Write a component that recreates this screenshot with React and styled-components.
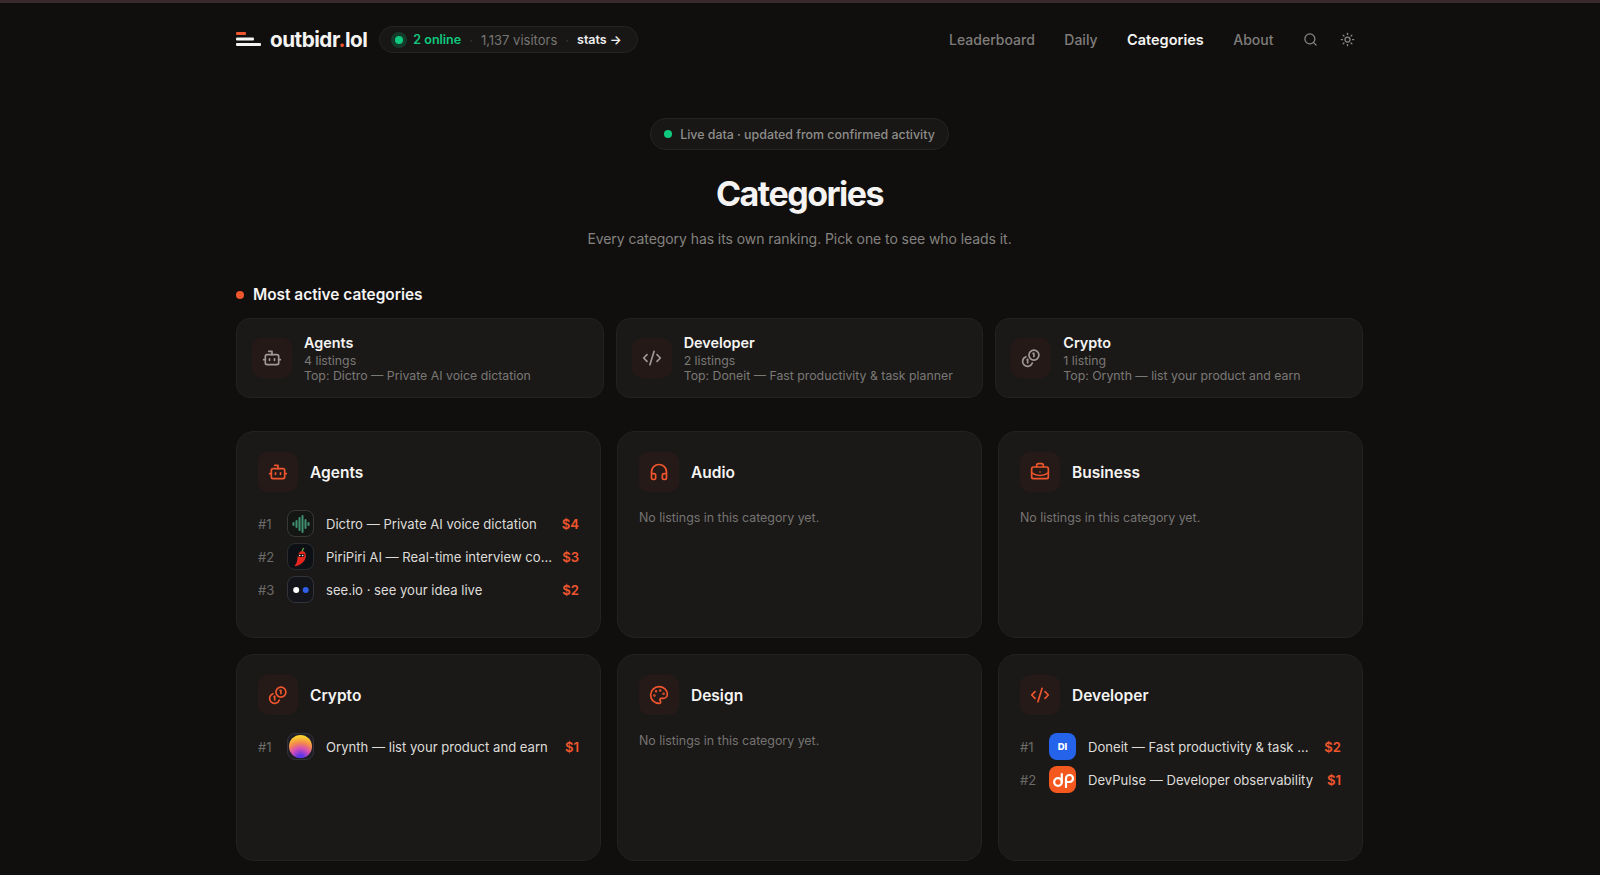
import React from "react";
import styled, { createGlobalStyle } from "styled-components";
import { Bot, Headphones, BriefcaseBusiness, Palette, CodeXml, Search, Sun } from "lucide-react";

const Global = createGlobalStyle`
  html, body { margin: 0; padding: 0; background: #100f0e; }
  body { font-family: Inter, "Liberation Sans", sans-serif; color: #f5f4f2; -webkit-font-smoothing: antialiased; }
  * { box-sizing: border-box; }
`;

const Page = styled.div`
  height: 875px;
  overflow: hidden;
  border-top: 3px solid #3a2a2e;
`;
const Container = styled.div`
  width: 1127px;
  margin-left: 236px;
`;
const Header = styled.header`
  height: 73px;
  display: flex;
  align-items: center;
  justify-content: space-between;
`;
const Left = styled.div`
  display: flex;
  align-items: center;
`;
const Brand = styled.div`
  display: flex;
  align-items: center;
  gap: 6px;
  font-size: 20.7px;
  font-weight: 700;
  letter-spacing: -0.5px;
  margin-right: 12px;
  span { color: #f0562e; }
`;
const BrandName = styled.div`
  margin-left: 3px;
`;
const StatPill = styled.div`
  height: 27px;
  border: 1px solid #252423;
  border-radius: 14px;
  background: #181716;
  display: flex;
  align-items: center;
  padding: 0 15px;
  font-size: 13px;
  color: #777572;
  white-space: nowrap;
`;
const PulseDot = styled.i`
  width: 8px;
  height: 8px;
  border-radius: 50%;
  background: #10c97e;
  box-shadow: 0 0 0 4px rgba(16, 201, 126, 0.2);
  margin-right: 10px;
`;
const Online = styled.b`
  color: #10c97e;
  font-weight: 600;
  font-size: 12.5px;
`;
const Sep = styled.span`
  margin: 0 8px;
  color: #3a3938;
`;
const StatsLink = styled.b`
  color: #f0efed;
  font-weight: 600;
  font-size: 12.5px;
`;
const Nav = styled.nav`
  display: flex;
  align-items: center;
  font-size: 14px;
  padding-right: 8px;
`;
const NavLink = styled.a`
  margin-right: 29.5px;
  color: ${(p) => (p.$active ? "#f5f4f2" : "#7f7d7a")};
  font-weight: ${(p) => (p.$active ? 600 : 500)};
  font-size: ${(p) => (p.$active ? "14.5px" : "14px")};
`;
const NavIcon = styled.span`
  display: flex;
  color: #8a8885;
  margin-left: ${(p) => p.$ml || 0}px;
`;
const Hero = styled.section`
  display: flex;
  flex-direction: column;
  align-items: center;
  padding-top: 42px;
`;
const LiveBadge = styled.div`
  height: 32px;
  padding: 0 13px;
  border: 1px solid #252423;
  border-radius: 16px;
  background: #181716;
  display: flex;
  align-items: center;
  gap: 8px;
  font-size: 12.4px;
  font-weight: 500;
  color: #8f8d8a;
`;
const GreenDot = styled.i`
  width: 8px;
  height: 8px;
  border-radius: 50%;
  background: #10c97e;
`;
const Title = styled.h1`
  margin: 22px 0 0;
  font-size: 34px;
  line-height: 44px;
  font-weight: 700;
  letter-spacing: -1.5px;
`;
const Subtitle = styled.p`
  margin: 12px 0 0;
  font-size: 14px;
  line-height: 22px;
  color: #84827f;
  letter-spacing: -0.07px;
`;
const SectionTitle = styled.h2`
  margin: 34px 0 12px;
  display: flex;
  align-items: center;
  gap: 9px;
  font-size: 15.4px;
  line-height: 22px;
  font-weight: 600;
  &::before {
    content: "";
    width: 8px;
    height: 8px;
    border-radius: 50%;
    background: #f0562e;
  }
`;
const TopGrid = styled.div`
  display: grid;
  grid-template-columns: repeat(3, minmax(0, 1fr));
  gap: 12px;
`;
const TopCard = styled.div`
  height: 80px;
  border: 1px solid #232221;
  border-radius: 14px;
  background: #1a1918;
  display: flex;
  align-items: center;
  gap: 12px;
  padding: 0 15px;
`;
const IconTile = styled.div`
  width: ${(p) => p.$size}px;
  height: ${(p) => p.$size}px;
  flex: none;
  border-radius: 10px;
  background: ${(p) => (p.$muted ? "#241917" : "#251a17")};
  color: ${(p) => (p.$muted ? "#a09a94" : "#f0562e")};
  display: flex;
  align-items: center;
  justify-content: center;
`;
const TopText = styled.div`
  font-size: 12.3px;
  line-height: 14.5px;
  color: #7a7875;
`;
const TopName = styled.div`
  font-size: 14.4px;
  line-height: 20px;
  font-weight: 600;
  margin-bottom: 1px;
  color: #f5f4f2;
`;
const CatGrid = styled.div`
  margin-top: 33px;
  display: grid;
  grid-template-columns: repeat(3, minmax(0, 1fr));
  gap: 16px;
`;
const CatCard = styled.div`
  height: 207px;
  border: 1px solid #232221;
  border-radius: 18px;
  background: #1a1918;
  padding: 20px 21px;
`;
const CatHead = styled.div`
  display: flex;
  align-items: center;
  gap: 12px;
  font-size: 15.5px;
  font-weight: 600;
  margin-bottom: 18px;
`;
const Empty = styled.div`
  margin-top: 16px;
  font-size: 12.4px;
  color: #767471;
`;
const Rows = styled.div`
  display: flex;
  flex-direction: column;
  gap: 6px;
`;
const Row = styled.div`
  height: 27px;
  display: flex;
  align-items: center;
  font-size: 13.1px;
`;
const Rank = styled.span`
  width: 29px;
  flex: none;
  color: #6d6b68;
`;
const Name = styled.span`
  flex: 1;
  min-width: 0;
  margin-left: 12px;
  white-space: nowrap;
  overflow: hidden;
  text-overflow: ellipsis;
  color: #dedcd9;
`;
const Price = styled.b`
  flex: none;
  margin-left: 8px;
  color: #f0562e;
  font-weight: 600;
`;
const Thumb = styled.span`
  width: 27px;
  height: 27px;
  flex: none;
  border-radius: 8px;
  border: 1px solid ${(p) => p.$border || "transparent"};
  background: ${(p) => p.$bg};
  color: #fff;
  display: flex;
  align-items: center;
  justify-content: center;
  overflow: hidden;
  font-size: 9.5px;
  font-weight: 800;
`;
const OrbBall = styled.i`
  width: 23px;
  height: 23px;
  border-radius: 50%;
  background: radial-gradient(circle at 50% 100%, #5b35e8 0%, #5b35e8 10%, #d74fb5 38%, #f48a4e 60%, #fdd42c 85%);
`;

const LogoMark = () => (
  <svg width="25" height="15" viewBox="0 0 25 15">
    <rect x="0" y="0" width="10" height="3" rx="1" fill="#f0562e" />
    <rect x="0" y="5.5" width="18" height="3" rx="1" fill="#f5f4f2" />
    <rect x="0" y="11" width="25" height="3" rx="1" fill="#f5f4f2" />
  </svg>
);
const CoinsIcon = ({ size }) => (
  <svg width={size} height={size} viewBox="0 0 24 24" fill="none" stroke="currentColor" strokeWidth="2" strokeLinecap="round" strokeLinejoin="round">
    <circle cx="15.5" cy="8.5" r="6" />
    <path d="M5.9 10.4A6 6 0 1 0 13.6 18" />
    <path d="M14.5 6.5h1v4" />
    <path d="m7.3 14.2.7-.7v4.5" />
  </svg>
);
const DictroArt = () => (
  <svg width="18" height="18" viewBox="0 0 18 18" stroke="#3f8f70" strokeWidth="2" strokeLinecap="round">
    <path d="M1.500 8v2M4.500 6v6M7.500 3v12M10.500 1v16M13.500 5v8M16.500 8v2" />
  </svg>
);
const ChiliArt = () => (
  <svg width="18" height="20" viewBox="3 0 18 23">
    <path d="M13.500 4.500c3.500.5 4.500 3.500 4 7-.8 5-5.500 9.500-12 10.500-.8.100-1-.5-.4-1 2-1.700 2.400-4.500 2.900-8.500.4-4 2.500-8.500 5.500-8z" fill="#e5261f" />
    <path d="M13 5c-.2-1.800.5-3.200 2-4l.8 1c-1.200.7-1.500 1.700-1.300 3.200z" fill="#5aa83a" />
    <rect x="8.500" y="8" width="7.500" height="3.400" rx="1.200" fill="#1b1310" />
    <circle cx="10.600" cy="9.700" r=".9" fill="#fff" />
    <circle cx="13.900" cy="9.700" r=".9" fill="#fff" />
  </svg>
);
const SeeArt = () => (
  <svg width="20" height="8" viewBox="0 0 20 8">
    <circle cx="5.200" cy="4" r="3" fill="#fff" />
    <circle cx="14.700" cy="4" r="3" fill="#2f5fe8" />
  </svg>
);
const PulseArt = () => (
  <svg width="22" height="16" viewBox="0 0 22 16" fill="none" stroke="#fff" strokeWidth="2.200" strokeLinecap="round">
    <circle cx="6" cy="10" r="3.800" />
    <path d="M9.800 2v8" />
    <path d="M14 15V6.500a3.500 3.500 0 1 1 3.500 3.500H15" />
  </svg>
);

const topCards = [
  { name: "Agents", icon: Bot, count: "4 listings", top: "Dictro — Private AI voice dictation" },
  { name: "Developer", icon: CodeXml, count: "2 listings", top: "Doneit — Fast productivity & task planner" },
  { name: "Crypto", icon: CoinsIcon, count: "1 listing", top: "Orynth — list your product and earn" },
];

const cats = [
  {
    name: "Agents",
    icon: Bot,
    rows: [
      { label: "Dictro — Private AI voice dictation", price: "$4", bg: "#141614", border: "#3a3835", art: <DictroArt /> },
      { label: "PiriPiri AI — Real-time interview coach", price: "$3", bg: "#0d1116", border: "#2a2c30", art: <ChiliArt /> },
      { label: "see.io · see your idea live", price: "$2", bg: "#14151b", border: "#33343a", art: <SeeArt /> },
    ],
  },
  { name: "Audio", icon: Headphones },
  { name: "Business", icon: BriefcaseBusiness },
  {
    name: "Crypto",
    icon: CoinsIcon,
    rows: [{ label: "Orynth — list your product and earn", price: "$1", bg: "#1f1e26", border: "#33323a", art: <OrbBall /> }],
  },
  { name: "Design", icon: Palette },
  {
    name: "Developer",
    icon: CodeXml,
    rows: [
      { label: "Doneit — Fast productivity & task planner", price: "$2", bg: "#2563eb", art: "DI" },
      { label: "DevPulse — Developer observability", price: "$1", bg: "#f4581f", art: <PulseArt /> },
    ],
  },
];

export default function App() {
  return (
    <>
      <Global />
      <Page>
        <Container>
          <Header>
            <Left>
              <Brand>
                <LogoMark />
                <BrandName>
                  outbidr<span>.</span>lol
                </BrandName>
              </Brand>
              <StatPill>
                <PulseDot />
                <Online>2 online</Online>
                <Sep>·</Sep>
                1,137 visitors
                <Sep>·</Sep>
                <StatsLink>stats →</StatsLink>
              </StatPill>
            </Left>
            <Nav>
              <NavLink>Leaderboard</NavLink>
              <NavLink>Daily</NavLink>
              <NavLink $active>Categories</NavLink>
              <NavLink>About</NavLink>
              <NavIcon><Search size={15} /></NavIcon>
              <NavIcon $ml={22}><Sun size={15} /></NavIcon>
            </Nav>
          </Header>
          <Hero>
            <LiveBadge>
              <GreenDot />
              Live data · updated from confirmed activity
            </LiveBadge>
            <Title>Categories</Title>
            <Subtitle>Every category has its own ranking. Pick one to see who leads it.</Subtitle>
          </Hero>
          <SectionTitle>Most active categories</SectionTitle>
          <TopGrid>
            {topCards.map((c) => (
              <TopCard key={c.name}>
                <IconTile $size={40} $muted>
                  <c.icon size={20} />
                </IconTile>
                <TopText>
                  <TopName>{c.name}</TopName>
                  <div>{c.count}</div>
                  <div>Top: {c.top}</div>
                </TopText>
              </TopCard>
            ))}
          </TopGrid>
          <CatGrid>
            {cats.map((c) => (
              <CatCard key={c.name}>
                <CatHead>
                  <IconTile $size={40}>
                    <c.icon size={20} />
                  </IconTile>
                  {c.name}
                </CatHead>
                {c.rows ? (
                  <Rows>
                    {c.rows.map((r, i) => (
                      <Row key={r.label}>
                        <Rank>#{i + 1}</Rank>
                        <Thumb $bg={r.bg} $border={r.border}>{r.art}</Thumb>
                        <Name>{r.label}</Name>
                        <Price>{r.price}</Price>
                      </Row>
                    ))}
                  </Rows>
                ) : (
                  <Empty>No listings in this category yet.</Empty>
                )}
              </CatCard>
            ))}
          </CatGrid>
        </Container>
      </Page>
    </>
  );
}
